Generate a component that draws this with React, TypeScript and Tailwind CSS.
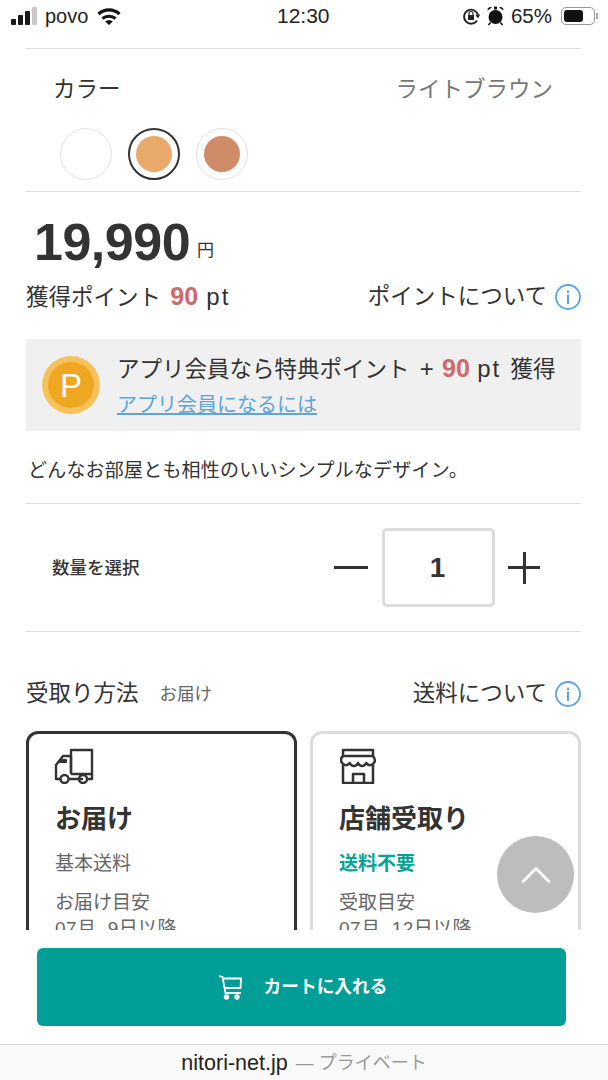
import { ChevronUp } from "lucide-react";

const font = { fontFamily: '"Liberation Sans", "Noto Sans CJK JP", sans-serif' };

const InfoIcon = () => (
  <svg width="26" height="26" viewBox="0 0 26 26" fill="none">
    <circle cx="13" cy="13" r="12" stroke="#5ba4dc" strokeWidth="1.800" />
    <rect x="12" y="6.500" width="2" height="2.500" fill="#5ba4dc" />
    <rect x="12" y="10.500" width="2" height="9.500" fill="#5ba4dc" />
  </svg>
);

const StatusBar = () => (
  <div className="h-[32px] flex items-center justify-between pl-[11px] pr-[10px] text-[#222] relative">
    <div className="flex items-center">
      <svg width="26" height="20" viewBox="0 0 26 20" fill="#1a1a1a">
        <rect x="0" y="13" width="5" height="6" rx="1" />
        <rect x="7" y="9" width="5" height="10" rx="1" />
        <rect x="14" y="5" width="5" height="14" rx="1" />
        <rect x="21" y="1" width="5" height="18" rx="1" fill="#c8c8c8" />
      </svg>
      <span className="text-[20px] ml-[8px] mb-[1px]">povo</span>
      <svg className="ml-[9px]" width="24" height="17" viewBox="0 0 24 17" fill="none" stroke="#111" strokeWidth="3.200">
        <path d="M1.500 6c6-5.500 15-5.500 21 0" />
        <path d="M5.500 10.500c3.500-3 9.500-3 13 0" />
        <path d="M12 17l-3.800-3.500c2-1.700 5.600-1.700 7.600 0z" fill="#111" stroke="none" />
      </svg>
    </div>
    <span className="absolute left-[277px] text-[21px] font-medium">12:30</span>
    <div className="flex items-center">
      <svg width="18" height="18" viewBox="0 0 18 18" fill="none" stroke="#222" strokeWidth="1.800">
        <path d="M15 13.500a7 7 0 1 1 1-5" />
        <path d="M17.500 7.500l-1.500 2.500-2-2" strokeWidth="1.400" />
        <rect x="6" y="8" width="6" height="5" fill="#222" stroke="none" />
        <path d="M7 8V6.500a2 2 0 0 1 4 0V8" strokeWidth="1.200" />
      </svg>
      <svg className="ml-[7px]" width="17" height="20" viewBox="0 0 17 20" fill="#111">
        <circle cx="8.500" cy="11" r="7" />
        <path d="M0.500 4.500a3 3 0 0 1 4.500-3zM16.500 4.500a3 3 0 0 0-4.500-3z" />
        <rect x="7" y="0.500" width="3" height="3" />
        <path d="M3.500 16.500l-2 2.500M13.500 16.500l2 2.500" stroke="#111" strokeWidth="1.600" />
      </svg>
      <span className="text-[20.500px] ml-[7px]">65%</span>
      <div className="ml-[9px] w-[34px] h-[18px] rounded-[5px] border border-[#999] p-[2px]">
        <div className="w-[19px] h-full rounded-[3px] bg-[#111]" />
      </div>
      <div className="w-[2px] h-[6px] bg-[#aaa] ml-[1px]" />
    </div>
  </div>
);

const Divider = () => <div className="ml-[26px] mr-[27px] h-[1px] bg-[#dedede]" />;

const TruckIcon = () => (
  <svg width="40" height="36" viewBox="0 0 40 36" fill="none" stroke="#333" strokeWidth="2.400" strokeLinejoin="round">
    <path d="M17 24V2h21v24H17" />
    <path d="M17 8H9L2 17v14h4" />
    <path d="M5 14h7v-2H7" strokeWidth="2" />
    <path d="M17 8v18" />
    <path d="M15 31h14M33 31h5V26" />
    <circle cx="10.500" cy="31" r="4" />
    <circle cx="29" cy="31" r="4" />
  </svg>
);

const StoreIcon = () => (
  <svg width="36" height="36" viewBox="0 0 36 36" fill="none" stroke="#333" strokeWidth="2.500" strokeLinejoin="round">
    <path d="M3 2h30v6H3z" />
    <path d="M3 8c-2 2-2.500 4-1.500 6 2 4 6 4 8.200 1 2 4 6.500 4 8.300 0 2 4 6.300 4 8.300 0 2 3 6.200 3 8.200-1 1-2 0-4-1.500-6" />
    <path d="M3 17v18h30V17" />
    <path d="M13 35V26h11v9" />
  </svg>
);

const CartIcon = () => (
  <svg width="24" height="25" viewBox="0 0 24 25" fill="none" stroke="#fff" strokeWidth="1.800">
    <path d="M0 1l3.500 1 3 16h15.500" />
    <path d="M4.500 3.500H22l-.5 9.500H6" />
    <circle cx="7.500" cy="22" r="1.800" fill="#fff" />
    <circle cx="18" cy="22" r="1.800" fill="#fff" />
  </svg>
);

const Swatch = ({ color, selected }: { color?: string; selected?: boolean }) => (
  <div className={`w-[52px] h-[52px] rounded-full border flex items-center justify-center ${selected ? "border-[#333] border-2" : "border-[#e2e2e2]"}`}>
    {color && <div className="w-[36px] h-[36px] rounded-full" style={{ backgroundColor: color }} />}
  </div>
);

export default function App() {
  return (
    <div className="w-[608px] h-[1080px] bg-white flex flex-col overflow-hidden relative text-[#333]" style={font}>
      <StatusBar />
      <div className="h-[898px] overflow-hidden shrink-0 pt-[16px]">
        <Divider />
        <div className="pl-[53px] pr-[55px] mt-[26px] flex justify-between items-center h-[30px] text-[22.500px]">
          <span>カラー</span>
          <span className="text-[#777]">ライトブラウン</span>
        </div>
        <div className="flex gap-[16px] pl-[60px] mt-[23px]">
          <Swatch />
          <Swatch color="#e8a96b" selected />
          <Swatch color="#d08c68" />
        </div>
        <div className="mt-[11px]"><Divider /></div>

        <div className="pl-[34px] mt-[20px] h-[60px] flex items-end">
          <span className="text-[52px] leading-[60px] font-bold tracking-[-0.5px]">19,990</span>
          <span className="text-[17px] ml-[7px] mb-[9px]">円</span>
        </div>
        <div className="ml-[26px] mr-[27px] mt-[10px] flex justify-between items-center h-[30px] text-[22.500px]">
          <span>獲得ポイント <span className="text-[25px] text-[#d06a6a] font-bold ml-[3px]">90</span> <span className="text-[24px] tracking-[2px] ml-[2px]">pt</span></span>
          <span className="flex items-center gap-[8px]">ポイントについて<InfoIcon /></span>
        </div>

        <div className="ml-[26px] mr-[27px] mt-[27px] h-[92px] bg-[#f0f0f0] flex items-center pl-[16px]">
          <div className="w-[58px] h-[58px] rounded-full bg-[#f7c25c] flex items-center justify-center shrink-0">
            <div className="w-[46px] h-[46px] rounded-full bg-[#eea721] flex items-center justify-center text-white text-[33px] leading-none">P</div>
          </div>
          <div className="ml-[17px] pt-[1px]">
            <div className="text-[22.500px] leading-[30px] whitespace-nowrap">
              アプリ会員なら特典ポイント <span className="text-[24px] ml-[4px]">+</span> <span className="text-[25px] text-[#d06a6a] font-bold ml-[2px]">90</span> <span className="text-[24px] tracking-[2px] ml-[1px]">pt</span> <span className="ml-[3px]">獲得</span>
            </div>
            <a className="text-[20px] leading-[26px] mt-[7px] block text-[#5ba4dc] underline">アプリ会員になるには</a>
          </div>
        </div>

        <p className="mx-[28px] mt-[26px] text-[19px] tracking-[0.2px] leading-[28px] whitespace-nowrap">どんなお部屋とも相性のいいシンプルなデザイン。</p>
        <div className="mt-[18px]"><Divider /></div>

        <div className="pl-[52px] pr-[68px] mt-[24px] flex items-center justify-between">
          <span className="text-[17.500px] font-medium pt-[2px]">数量を選択</span>
          <div className="flex items-center">
            <div className="w-[34px] h-[3px] bg-[#333]" />
            <div className="w-[113px] h-[79px] ml-[14px] border-[3px] border-[#dcdcdc] rounded-[5px] flex items-center justify-center text-[28px] font-bold pr-[2px]">1</div>
            <div className="relative w-[32px] h-[32px] ml-[13px]">
              <div className="absolute left-0 top-[14.500px] w-[32px] h-[3px] bg-[#333]" />
              <div className="absolute left-[14.500px] top-0 w-[3px] h-[32px] bg-[#333]" />
            </div>
          </div>
        </div>
        <div className="mt-[24px]"><Divider /></div>

        <div className="ml-[26px] mr-[27px] mt-[47px] flex justify-between items-center h-[30px]">
          <span className="flex items-center text-[22.500px]">受取り方法<span className="text-[17.500px] text-[#666] ml-[21px]">お届け</span></span>
          <span className="flex items-center gap-[8px] text-[22.500px]">送料について<InfoIcon /></span>
        </div>

        <div className="ml-[26px] mr-[27px] mt-[22px] grid grid-cols-2 gap-[13px]">
          <div className="h-[240px] border-[3px] border-[#333] rounded-[12px] pl-[27px] pt-[15px]">
            <div className="-ml-[2px] -mt-[1px] h-[37px]"><TruckIcon /></div>
            <div className="text-[26px] leading-[34px] font-bold mt-[17px] -ml-[1px]">お届け</div>
            <div className="text-[19px] leading-[26px] text-[#666] mt-[15px] -ml-[1px]">基本送料</div>
            <div className="text-[19px] leading-[26px] text-[#666] mt-[13px] -ml-[1px]">お届け目安</div>
            <div className="text-[19px] leading-[26px] text-[#666] whitespace-pre -ml-[1px] tracking-[0.4px]">07月  9日以降</div>
          </div>
          <div className="h-[240px] border-[3px] border-[#dcdcdc] rounded-[12px] pl-[27px] pt-[15px]">
            <div className="-mt-[1px] h-[37px]"><StoreIcon /></div>
            <div className="text-[26px] leading-[34px] font-bold mt-[17px] -ml-[1px]">店舗受取り</div>
            <div className="text-[19px] leading-[26px] text-[#00a596] font-bold mt-[15px] -ml-[1px]">送料不要</div>
            <div className="text-[19px] leading-[26px] text-[#666] mt-[13px] -ml-[1px]">受取目安</div>
            <div className="text-[19px] leading-[26px] text-[#666] whitespace-pre -ml-[1px] tracking-[0.4px]">07月  12日以降</div>
          </div>
        </div>
      </div>

      <div className="flex-1 flex flex-col">
        <div className="ml-[37px] mr-[42px] mt-[18px] h-[78px] rounded-[6px] bg-[#009e96] flex items-center justify-center text-white gap-[21px] pl-[3px]">
          <CartIcon />
          <span className="text-[17.700px] font-bold">カートに入れる</span>
        </div>
        <div className="mt-[18px] flex-1 border-t border-[#dcdcdc] bg-[#f9f9f9] flex items-center justify-center pt-[1px]">
          <span className="text-[#222] text-[21.500px]">nitori-net.jp</span>
          <span className="text-[#999] text-[18px] ml-[8px]">— プライベート</span>
        </div>
      </div>

      <div className="absolute left-[497px] top-[836px] w-[77px] h-[77px] rounded-full bg-[#bdbdbe] flex items-center justify-center">
        <ChevronUp size={52} color="#fff" strokeWidth={1.300} />
      </div>
    </div>
  );
}
